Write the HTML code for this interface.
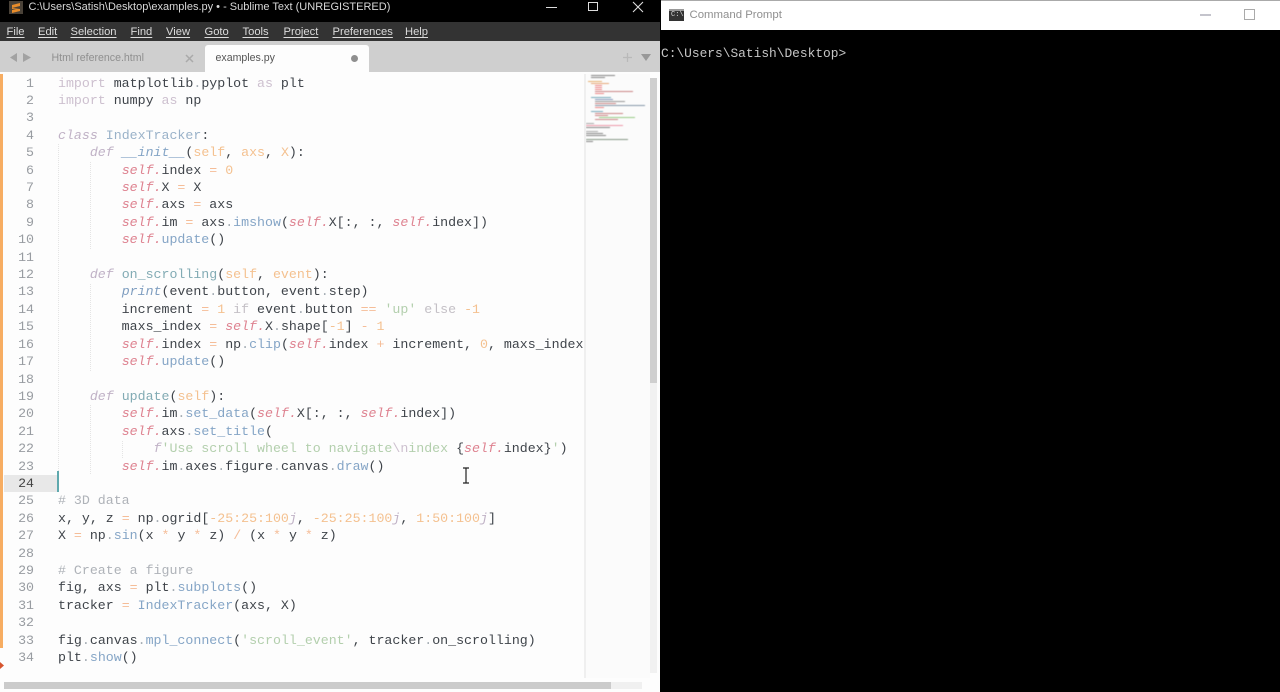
<!DOCTYPE html>
<html><head><meta charset="utf-8"><title>Sublime Text</title>
<style>
html,body{margin:0;padding:0;width:1280px;height:692px;overflow:hidden;background:#000}
*{box-sizing:border-box}
.a{position:absolute}
#code,#nums{position:absolute;margin:0;top:74.6px;font:13.27px/17.4px "Liberation Mono",monospace;color:#3f444a;white-space:pre;filter:blur(.25px)}
#code{left:58px;width:526px;overflow:hidden;height:600px}
#nums{left:0;width:34px;text-align:right;color:#989ca1}
.k{color:#cdc0cf}.i{font-style:italic}.d{color:#c0b2c6;font-style:italic}
.s{color:#de8290;font-style:italic}.f{color:#85a5c6}.p{color:#f4c190}.o{color:#f5bd98}
.g{color:#b3cfad}.c{color:#aeb2b8}.w{color:#a5adb4}.y{color:#9ab2c9}.t{color:#82abb4}.pr{color:#7f9ec0;font-style:italic}.e{color:#c4c0c6}
.menu span{position:absolute;top:25px;font:11.2px/14px "Liberation Sans",sans-serif;color:#dcdcdc;text-decoration:underline;text-decoration-thickness:0;text-underline-offset:2px;filter:blur(.2px)}
.g1{position:absolute;width:1px;background-image:linear-gradient(#e4e4e4 50%,transparent 50%);background-size:1px 2px}
.m{position:absolute;height:1.4px}
</style></head><body>
<div class="a" style="left:0;top:0;width:660px;height:692px;background:#fdfdfd;overflow:hidden">
 <div class="a" style="left:0;top:0;width:660px;height:22px;background:#000"></div>
 <div class="a" style="left:9px;top:1px;width:14px;height:13px;background:#4a4238"></div>
 <svg class="a" style="left:9px;top:1px" width="14" height="13"><path d="M3 4L11 2V5L3 7ZM3 7L11 8V10L3 12V9L7 8.5L3 8Z" fill="#e88c2a"/></svg>
 <div class="a" style="left:28.5px;top:0;font:11px/15px 'Liberation Sans',sans-serif;color:#d8d8d8;white-space:nowrap;filter:blur(.2px)">C:\Users\Satish\Desktop\examples.py • - Sublime Text (UNREGISTERED)</div>
 <div class="a" style="left:546px;top:7px;width:11px;height:1px;background:#ddd"></div>
 <div class="a" style="left:588px;top:2px;width:10px;height:9px;border:1px solid #ddd"></div>
 <svg class="a" style="left:632px;top:1px" width="12" height="12"><path d="M1 1L11 11M11 1L1 11" stroke="#ddd" stroke-width="1.1"/></svg>

 <div class="a menu" style="left:0;top:0;width:660px;height:42px">
  <div class="a" style="left:0;top:22px;width:660px;height:19px;background:#333"></div>
  <span style="left:6.5px">File</span><span style="left:38px">Edit</span><span style="left:70.5px">Selection</span><span style="left:130.5px">Find</span><span style="left:166px">View</span><span style="left:204.5px">Goto</span><span style="left:242.5px">Tools</span><span style="left:283.5px">Project</span><span style="left:332.5px">Preferences</span><span style="left:405px">Help</span>
 </div>

 <div class="a" style="left:0;top:41px;width:660px;height:31px;background:#cfcfcf"></div>
 <svg class="a" style="left:9px;top:52px" width="24" height="11"><path d="M1 5.5L8 1V10ZM14 1L22 5.5L14 10Z" fill="#a2a2a2"/></svg>
 <div class="a" style="left:51.5px;top:51px;font:10.6px/14px 'Liberation Sans',sans-serif;color:#8f8f8f;white-space:nowrap;filter:blur(.2px)">Html reference.html</div>
 <svg class="a" style="left:185px;top:54px" width="10" height="9"><path d="M1 1L8 8M8 1L1 8" stroke="#aaa" stroke-width="1.5"/></svg>
 <div class="a" style="left:205px;top:45px;width:164px;height:28px;background:#fdfdfd;border-radius:3px 3px 0 0"></div>
 <div class="a" style="left:215.5px;top:51px;font:10.6px/14px 'Liberation Sans',sans-serif;color:#555;white-space:nowrap;filter:blur(.2px)">examples.py</div>
 <div class="a" style="left:351px;top:55px;width:7px;height:7px;border-radius:50%;background:#8f8f8f"></div>
 <svg class="a" style="left:622px;top:52px" width="30" height="11"><path d="M1 5.5H10M5.5 1V10" stroke="#b9b9b9" stroke-width="1.3"/><path d="M19 2H29L24 9Z" fill="#989898"/></svg>

 <div class="a" style="left:0;top:74px;width:3px;height:574px;background:#f7ad62"></div>
 <div class="a" style="left:0;top:662px;width:4px;height:7px;background:#d6552f;clip-path:polygon(0 0,100% 50%,0 100%)"></div>
 <div class="a" style="left:4px;top:475px;width:54px;height:17px;background:#e8e8e8"></div>
 <div class="a" style="left:57px;top:471px;width:2px;height:21px;background:#5fa9ae"></div>

 <div class="g1" style="left:58px;top:144px;height:327px"></div>
 <div class="g1" style="left:90px;top:162px;height:88px"></div>
 <div class="g1" style="left:90px;top:284px;height:88px"></div>
 <div class="g1" style="left:90px;top:405px;height:70px"></div>
 <div class="g1" style="left:122px;top:441px;height:17px"></div>

<pre id="nums">1
2
3
4
5
6
7
8
9
10
11
12
13
14
15
16
17
18
19
20
21
22
23
<span style="color:#444">24</span>
25
26
27
28
29
30
31
32
33
34</pre>
<pre id="code"><span class="k">import</span> matplotlib<span class="w">.</span>pyplot <span class="k">as</span> plt
<span class="k">import</span> numpy <span class="k">as</span> np

<span class="d">class</span> <span class="y">IndexTracker</span>:
    <span class="d">def</span> <span class="f i">__init__</span>(<span class="p">self</span>, <span class="p">axs</span>, <span class="p">X</span>):
        <span class="s">self.</span>index <span class="o">=</span> <span class="p">0</span>
        <span class="s">self.</span>X <span class="o">=</span> X
        <span class="s">self.</span>axs <span class="o">=</span> axs
        <span class="s">self.</span>im <span class="o">=</span> axs<span class="w">.</span><span class="f">imshow</span>(<span class="s">self.</span>X[:, :, <span class="s">self.</span>index])
        <span class="s">self.</span><span class="f">update</span>()

    <span class="d">def</span> <span class="t">on_scrolling</span>(<span class="p">self</span>, <span class="p">event</span>):
        <span class="pr">print</span>(event<span class="w">.</span>button, event<span class="w">.</span>step)
        increment <span class="o">=</span> <span class="p">1</span> <span class="e">if</span> event<span class="w">.</span>button <span class="o">==</span> <span class="g">'up'</span> <span class="e">else</span> <span class="p">-1</span>
        maxs_index <span class="o">=</span> <span class="s">self.</span>X<span class="w">.</span>shape[<span class="p">-1</span>] <span class="o">-</span> <span class="p">1</span>
        <span class="s">self.</span>index <span class="o">=</span> np<span class="w">.</span><span class="f">clip</span>(<span class="s">self.</span>index <span class="o">+</span> increment, <span class="p">0</span>, maxs_index)
        <span class="s">self.</span><span class="f">update</span>()

    <span class="d">def</span> <span class="t">update</span>(<span class="p">self</span>):
        <span class="s">self.</span>im<span class="w">.</span><span class="f">set_data</span>(<span class="s">self.</span>X[:, :, <span class="s">self.</span>index])
        <span class="s">self.</span>axs<span class="w">.</span><span class="f">set_title</span>(
            <span class="d">f</span><span class="g">'Use scroll wheel to navigate</span><span class="k">\n</span><span class="g">index </span>{<span class="s">self.</span>index}<span class="g">'</span>)
        <span class="s">self.</span>im<span class="w">.</span>axes<span class="w">.</span>figure<span class="w">.</span>canvas<span class="w">.</span><span class="f">draw</span>()

<span class="c"># 3D data</span>
x, y, z <span class="o">=</span> np<span class="w">.</span>ogrid[<span class="p">-25:25:100</span><span class="d">j</span>, <span class="p">-25:25:100</span><span class="d">j</span>, <span class="p">1:50:100</span><span class="d">j</span>]
X <span class="o">=</span> np<span class="w">.</span><span class="f">sin</span>(x <span class="o">*</span> y <span class="o">*</span> z) <span class="o">/</span> (x <span class="o">*</span> y <span class="o">*</span> z)

<span class="c"># Create a figure</span>
fig, axs <span class="o">=</span> plt<span class="w">.</span><span class="f">subplots</span>()
tracker <span class="o">=</span> <span class="f">IndexTracker</span>(axs, X)

fig<span class="w">.</span>canvas<span class="w">.</span><span class="f">mpl_connect</span>(<span class="g">'scroll_event'</span>, tracker<span class="w">.</span>on_scrolling)
plt<span class="w">.</span><span class="f">show</span>()</pre>

 <svg class="a" style="left:461px;top:467px" width="10" height="17"><path d="M2 1H8M5 1V16M2 16H8" stroke="#222" stroke-width="1.2" fill="none"/></svg>

 <!-- minimap -->
 <div class="a" style="left:584px;top:74px;width:66px;height:604px;background:#fbfbfb"></div>
 <div class="a" style="left:585px;top:74px;filter:blur(.6px);width:62px;height:70px">
  <div class="m" style="left:6px;top:1px;width:24px;background:#888"></div>
  <div class="m" style="left:6px;top:3px;width:14px;background:#888"></div>
  <div class="m" style="left:3px;top:7px;width:14px;background:#e8b070"></div>
  <div class="m" style="left:6px;top:9px;width:18px;background:#e8a878"></div>
  <div class="m" style="left:10px;top:11px;width:7px;background:#e88"></div>
  <div class="m" style="left:10px;top:13px;width:7px;background:#e88"></div>
  <div class="m" style="left:10px;top:15px;width:7px;background:#e88"></div>
  <div class="m" style="left:10px;top:17px;width:38px;background:#c88"></div>
  <div class="m" style="left:10px;top:19px;width:9px;background:#e88"></div>
  <div class="m" style="left:6px;top:23px;width:20px;background:#7ab"></div>
  <div class="m" style="left:10px;top:25px;width:18px;background:#89b"></div>
  <div class="m" style="left:10px;top:27px;width:30px;background:#999"></div>
  <div class="m" style="left:10px;top:29px;width:21px;background:#c88"></div>
  <div class="m" style="left:10px;top:31px;width:50px;background:#89a"></div>
  <div class="m" style="left:10px;top:33px;width:9px;background:#e88"></div>
  <div class="m" style="left:6px;top:37px;width:12px;background:#7ab"></div>
  <div class="m" style="left:10px;top:39px;width:28px;background:#c88"></div>
  <div class="m" style="left:10px;top:41px;width:13px;background:#c88"></div>
  <div class="m" style="left:14px;top:43px;width:36px;background:#9c8"></div>
  <div class="m" style="left:10px;top:45px;width:23px;background:#c88"></div>
  <div class="m" style="left:1px;top:49px;width:8px;background:#aaa"></div>
  <div class="m" style="left:1px;top:51px;width:37px;background:#e9a"></div>
  <div class="m" style="left:1px;top:53px;width:24px;background:#888"></div>
  <div class="m" style="left:1px;top:57px;width:12px;background:#aaa"></div>
  <div class="m" style="left:1px;top:59px;width:17px;background:#888"></div>
  <div class="m" style="left:1px;top:61px;width:20px;background:#888"></div>
  <div class="m" style="left:1px;top:65px;width:42px;background:#898"></div>
  <div class="m" style="left:1px;top:67px;width:7px;background:#888"></div>
 </div>
 <div class="a" style="left:584px;top:74px;width:2px;height:604px;background:#efefef"></div>
 <div class="a" style="left:650px;top:78px;width:7px;height:305px;background:#cfcfcf"></div>
 <div class="a" style="left:650px;top:383px;width:7px;height:290px;background:#f1f1f1"></div>
 <div class="a" style="left:4px;top:682px;width:638px;height:7px;background:#f0f0f0"></div>
 <div class="a" style="left:4px;top:682px;width:607px;height:7px;background:#cbcbcb"></div>
</div>

<div class="a" style="left:661px;top:0;width:619px;height:30px;background:#fff;border-top:1px solid #aaa"></div>
<div class="a" style="left:669px;top:9px;width:15px;height:12px;background:#333;border-top:2px solid #999"></div>
<div class="a" style="left:671px;top:12px;font:7px/7px 'Liberation Mono',monospace;color:#ddd">C:\</div>
<div class="a" style="left:689.5px;top:8px;font:11.4px/15px 'Liberation Sans',sans-serif;color:#8f8f8f;white-space:nowrap;filter:blur(.2px)">Command Prompt</div>
<div class="a" style="left:1200px;top:14px;width:11px;height:2px;background:#c4c4cc"></div>
<div class="a" style="left:1244px;top:9px;width:11px;height:11px;border:1px solid #aaa"></div>
<div class="a" style="left:661px;top:30px;width:619px;height:662px;background:#000"></div>
<div class="a" style="left:661px;top:45px;font:12.87px/17px 'Liberation Mono',monospace;color:#c6c6c6;white-space:pre;filter:blur(.2px)">C:\Users\Satish\Desktop&gt;</div>
</body></html>
